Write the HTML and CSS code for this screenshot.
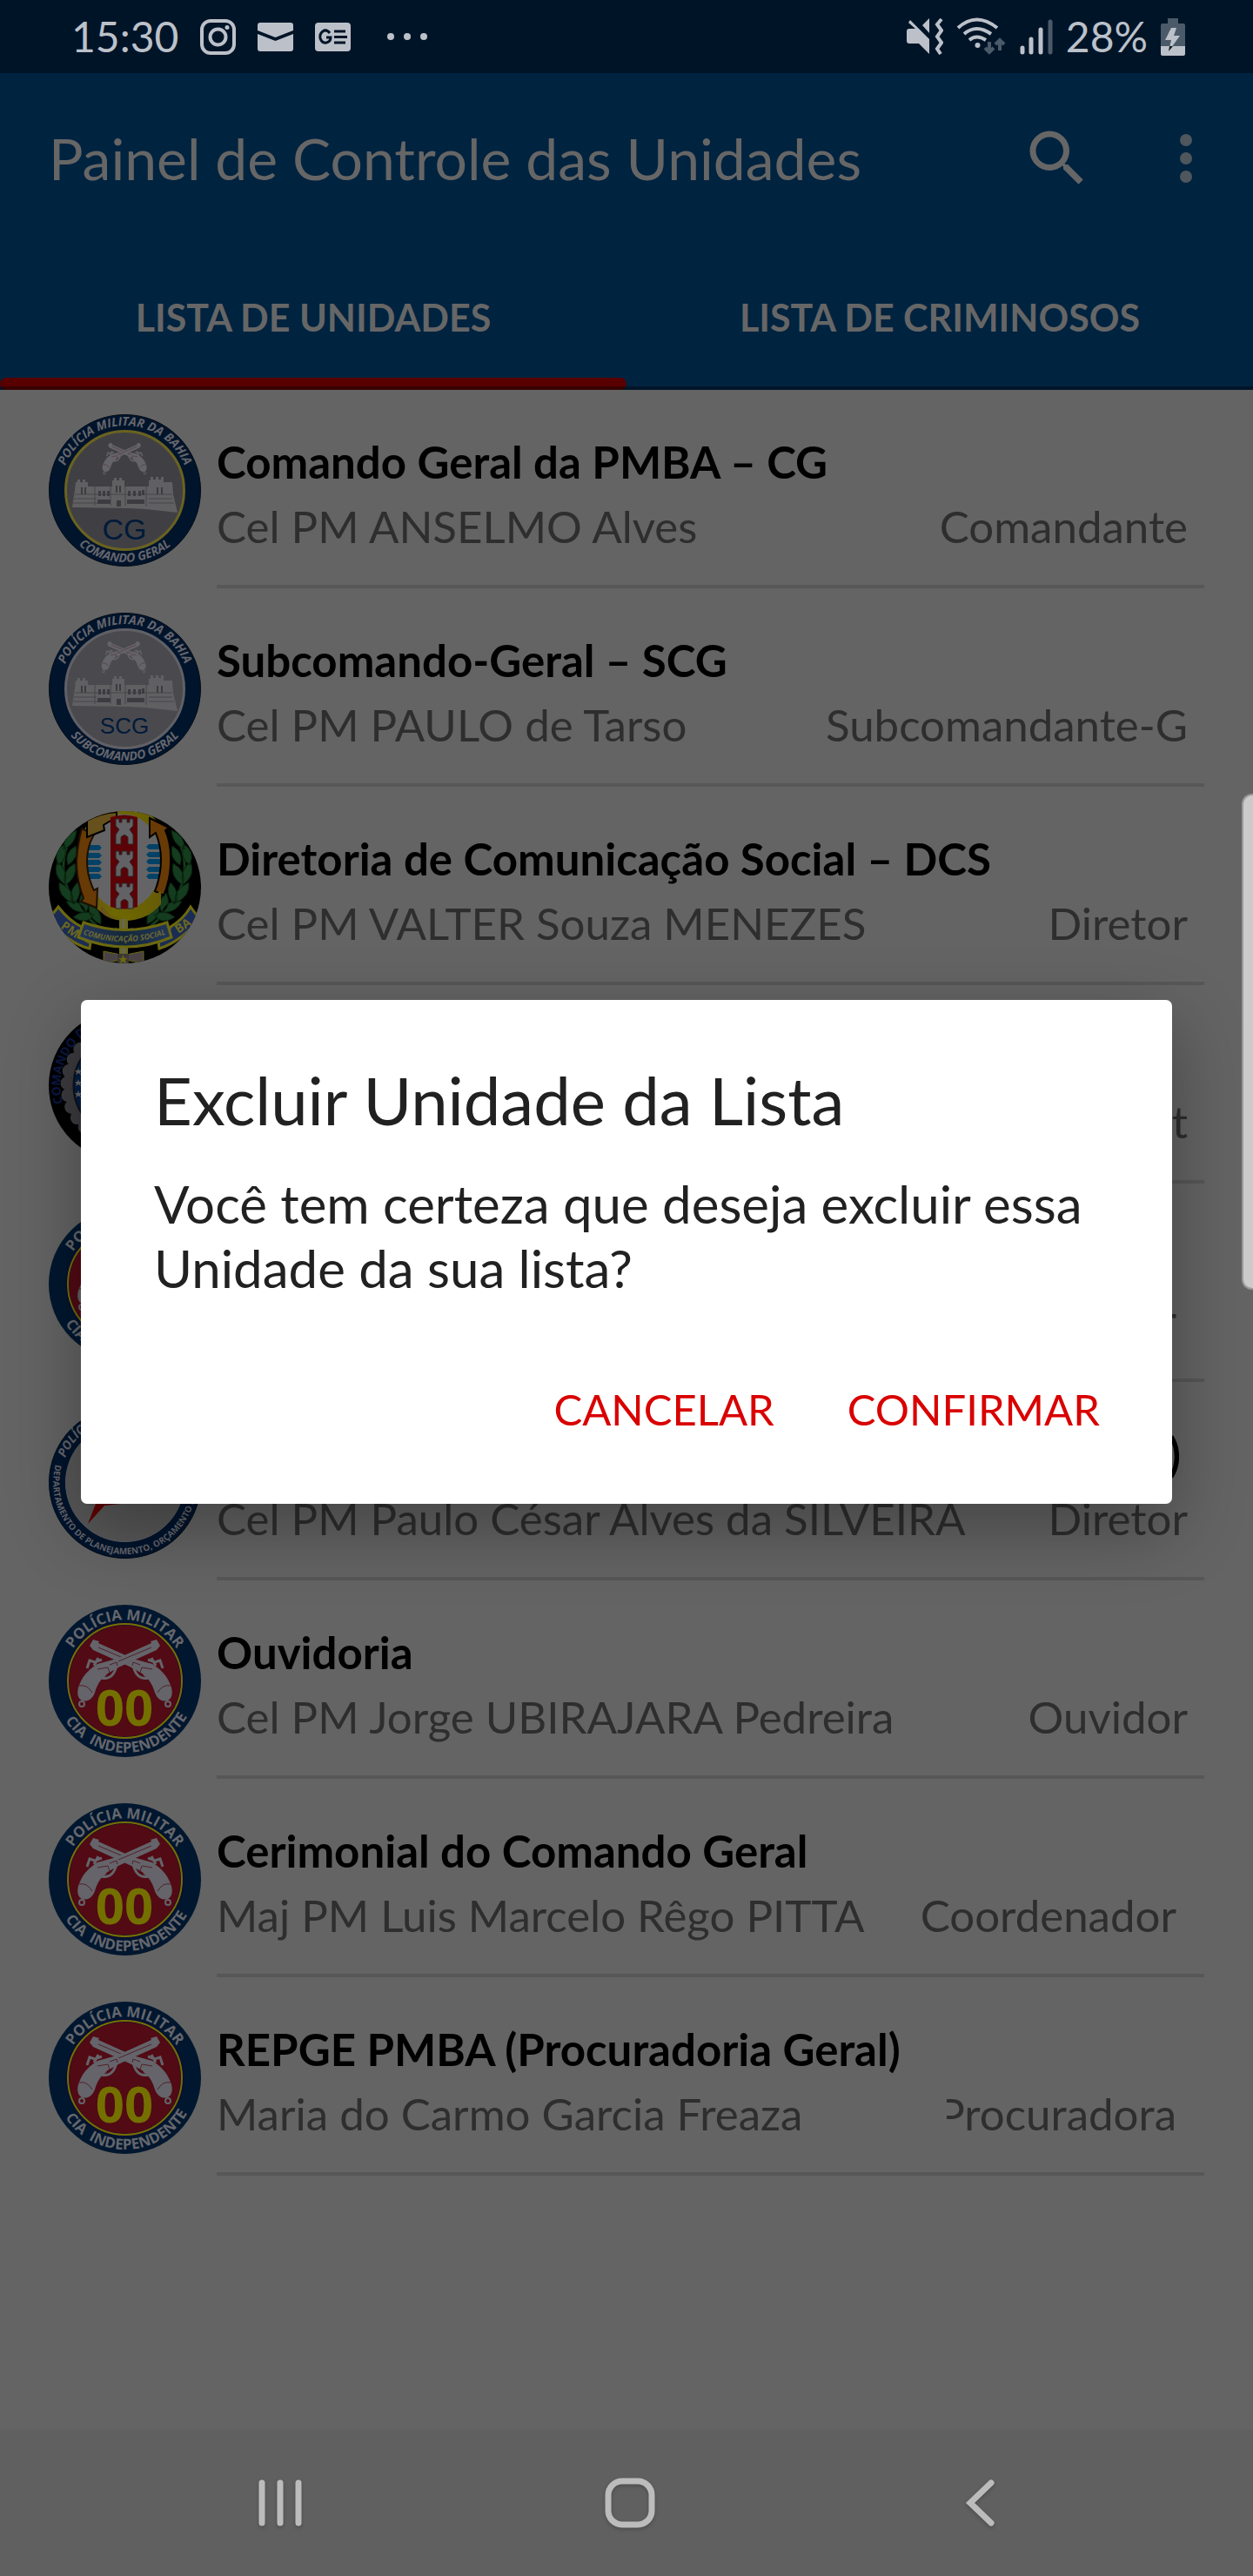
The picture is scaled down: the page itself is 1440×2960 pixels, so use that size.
FILE: index.html
```html
<!DOCTYPE html>
<html lang="pt-BR">
<head>
<meta charset="utf-8">
<meta name="viewport" content="width=device-width, initial-scale=1">
<title>Painel de Controle das Unidades</title>
<link rel="stylesheet" href="styles.css">
</head>
<body>
<svg class="defs" aria-hidden="true">
  <defs>
    <path id="arc-top-70" d="M17.5 87.5A70 70 0 0 1 157.5 87.5"/>
    <path id="arc-top-74" d="M21.500 120.500A74 74 0 1 1 153.500 120.500"/>
    <path id="arc-bottom-82" d="M7.500 67.500A82.460 82.460 0 1 0 167.500 67.500"/>
    <g id="pistol">
      <path fill="#64646a" d="M118 44l-1-2 7-2 4 7-4 5-31 14-13 6-14 8c-8 7-11 14-13 21-3 8-9 11-15 9-6-3-6-12-2-20 4-10 12-17 20-22l22-6z"/>
      <path fill="none" stroke="#64646a" stroke-width="3" d="M60 84q14 3 18-14M66 75q0 9-8 6M44 73l3-9 6 2 8-3M52 70l5-9"/>
      <circle cx="38" cy="114" r="3" fill="none" stroke="#64646a" stroke-width="2"/>
      <path fill="none" stroke="#52202a" stroke-width="1" d="M56 74l12-2 2 6M80 65l38-16M35 93q9-2 15 8M70 69l8-3 1 4"/>
    </g>
    <g id="pistols">
      <use href="#pistol" transform="translate(175) scale(-1 1)"/>
      <use href="#pistol"/>
    </g>
    <g id="fort">
      <path fill="#606062" d="M27 107l3-20 1-9h2v-3h3v3h3v-3h3v3h3v5h28v-7h2v-3h3v3h3v-3h3v3h3v7h28v-7h2v-4h3v3h3v-3h3v3h3v-3h3v6h10l1 14 5 21-37-4-20-1z"/>
      <path fill="none" stroke="#46464a" stroke-width="1" d="M30 92h112M29 97h26M28 102h30M115 97h27M115 102h29M53 83v22M71 83v22M88 83v22M112 82v24"/>
      <path fill="#3c3c40" d="M37 84h2v8h-2zM41 84h2v8h-2zM57 88h3v6h-3zM62 88h3v6h-3zM67 88h3v6h-3zM77 82h2v8h-2zM81 82h2v8h-2zM91 88h3v6h-3zM97 88h3v6h-3zM103 88h3v6h-3zM107 87h3v6h-3zM124 84h2v8h-2zM129 84h2v8h-2zM56 98h15v5h-15zM90 98h20v5h-20zM78 99h5v7h-5z"/>
    </g>
    <g id="crest-cia">
      <circle cx="87.500" cy="87.500" r="87.500" fill="#00172f"/>
      <circle cx="87.500" cy="87.500" r="66" fill="#520a14" stroke="#0c0c36" stroke-width="4"/>
      <circle cx="87.500" cy="87.500" r="65.500" fill="none" stroke="#747000" stroke-width="2"/>
      <text class="crest-text crest-text-cia" text-anchor="middle"><textPath href="#arc-top-70" startOffset="50%">POLÍCIA MILITAR</textPath></text>
      <text class="crest-text crest-text-cia" text-anchor="middle"><textPath href="#arc-bottom-82" startOffset="51%">CIA &#160;INDEPENDENTE</textPath></text>
      <use href="#pistols"/>
      <text class="crest-number" x="87" y="139" text-anchor="middle">00</text>
    </g>
    <path id="tower" fill="#626264" stroke="#28282a" stroke-width="1" d="M0 0h4v4h3V0h6v4h3V0h4v8l-4 4 4 6v11h-6v-8q-4-5-8 0v8H0V18l4-6-4-4z"/>
    <g id="laurel">
      <path fill="none" stroke="#123a1a" stroke-width="3" d="M28 24Q2 72 36 112T78 134"/>
      <g fill="#143c1e" stroke="#0a2210" stroke-width="1">
        <path d="M32 22q-16 6-15 22 14-6 15-22zM18 38q-14 8-7 24 12-8 7-24zM31 40q4 14-9 22-5-14 9-22zM10 58q-6 16 8 26 6-14-8-26zM30 60q4 16-11 25-5-16 11-25zM12 82q-2 16 16 24 2-16-16-24zM33 82q7 12-4 25-9-12 4-25zM20 104q8 14 23 12-6-15-23-12zM38 94q12 10 5 23-12-8-5-23zM28 122q12-10 24-3-8 13-24 3zM46 108q16 4 14 22-15-6-14-22z"/>
      </g>
    </g>
  </defs>
</svg>

<div class="screen">
  <header class="statusbar">
    <div class="status-group">
      <span class="status-text">15:30</span>
      <svg class="ico-insta" width="41" height="41" viewBox="0 0 41 41" fill="none" stroke="#bcc1c9" stroke-width="4"><rect x="2" y="2" width="37" height="37" rx="10"/><circle cx="20.500" cy="20.500" r="9"/><circle cx="31" cy="9.500" r="2.500" fill="#bcc1c9" stroke="none"/></svg>
      <svg width="41" height="33" viewBox="0 0 41 33" fill="#bcc1c9"><path d="M3 0h35q3 0 3 3v6L20.500 17 0 9V3q0-3 3-3zM0 13l20.500 8L41 13v17q0 3-3 3H3q-3 0-3-3z"/></svg>
      <svg width="41" height="33" viewBox="0 0 41 33"><rect width="41" height="33" rx="4" fill="#bcc1c9"/><path fill="none" stroke="#001428" stroke-width="3" d="M17 12q-4-5-8-2-4 3-3 8 2 6 7 5 5-1 5-6h-5M22 10h13M22 16.500h15M22 23h13"/></svg>
      <svg class="ico-dots" width="48" height="8" viewBox="0 0 48 8" fill="#bcc1c9"><circle cx="5" cy="4" r="4"/><circle cx="24" cy="4" r="4"/><circle cx="43" cy="4" r="4"/></svg>
    </div>
    <div class="status-group status-right">
      <svg width="42" height="42" viewBox="0 0 42 42" fill="#bcc1c9"><path d="M4 2l22 22v17L14 29H3q-3 0-3-3V15q0-3 3-3h7L2 5zM26 0v17l-8-9z"/><path fill="none" stroke="#bcc1c9" stroke-width="4" d="M40 1l-5 6 5 7-5 7 5 7-5 7 4 6"/></svg>
      <svg width="58" height="44" viewBox="0 0 58 44" fill="none" stroke="#bcc1c9" stroke-width="4"><path d="M2 12q21-19 45 0M9 19q14-12 31 0M15 26q8-7 19 0"/><circle cx="24.500" cy="32" r="3" fill="#bcc1c9" stroke="none"/><path stroke="#4b5a68" d="M38 28v12M33 35l5 5 5-5M50 38V26M45 31l5-5 5 5"/></svg>
      <svg width="38" height="42" viewBox="0 0 38 42" stroke="#bcc1c9" stroke-width="5" stroke-linecap="round"><path d="M3 34v5M13 24v15M24 13v26"/><path stroke="#4b5a68" d="M35 4v35"/></svg>
      <span class="status-text">28%</span>
      <svg width="28" height="43" viewBox="0 0 28 43"><path fill="#4b5a68" d="M8 6V0h12v6h6q2 0 2 2v24H0V8q0-2 2-2z"/><path fill="#bcc1c9" d="M0 32h28v9q0 2-2 2H2q-2 0-2-2zM12 11h6l-3 9h7L9 38l3-13H5z"/><path fill="#101820" d="M10 32h4l-5 6z"/></svg>
    </div>
  </header>

  <div class="appbar">
    <div class="toolbar">
      <h1>Painel de Controle das Unidades</h1>
      <button class="icon-button" type="button" aria-label="Pesquisar"><svg width="84" height="84" viewBox="0 0 24 24" fill="#666"><path d="M15.500 14h-.79l-.28-.27A6.470 6.470 0 0 0 16 9.500 6.500 6.500 0 1 0 9.500 16c1.610 0 3.090-.59 4.230-1.570l.27.28v.79l5 4.990L20.490 19l-4.990-5zm-6 0C7.010 14 5 11.990 5 9.500S7.010 5 9.500 5 14 7.010 14 9.500 11.990 14 9.500 14z"/></svg></button>
      <button class="icon-button" type="button" aria-label="Mais opções"><svg width="84" height="84" viewBox="0 0 24 24" fill="#4f565c"><circle cx="12" cy="6" r="2"/><circle cx="12" cy="12" r="2"/><circle cx="12" cy="18" r="2"/></svg></button>
    </div>
    <nav class="tabs">
      <button class="tab active" type="button">LISTA DE UNIDADES</button>
      <button class="tab" type="button">LISTA DE CRIMINOSOS</button>
    </nav>
  </div>

  <main>
    <ul class="units">
      <li>
        <svg class="crest" viewBox="0 0 175 175" aria-hidden="true">
          <circle cx="87.500" cy="87.500" r="87" fill="#00142c" stroke="#000a14"/>
          <circle cx="87.500" cy="87.500" r="68" fill="#404044" stroke="#6a6220" stroke-width="3"/>
          <text class="crest-text" text-anchor="middle"><textPath href="#arc-top-74" startOffset="50%">POLÍCIA MILITAR DA BAHIA</textPath></text>
          <text class="crest-text" text-anchor="middle"><textPath href="#arc-bottom-82" startOffset="50%">COMANDO GERAL</textPath></text>
          <use href="#pistols" transform="translate(46 14) scale(.47)"/>
          <use href="#fort"/>
          <text class="crest-sigla" x="87" y="144" text-anchor="middle">CG</text>
        </svg>
        <div class="unit">
          <h2>Comando Geral da PMBA – CG</h2>
          <p><span>Cel PM ANSELMO Alves</span><span class="role">Comandante</span></p>
        </div>
      </li>
      <li>
        <svg class="crest" viewBox="0 0 175 175" aria-hidden="true">
          <circle cx="87.500" cy="87.500" r="87" fill="#00142c" stroke="#000a14"/>
          <circle cx="87.500" cy="87.500" r="68" fill="#4a4a4e" stroke="#606066" stroke-width="3"/>
          <text class="crest-text" text-anchor="middle"><textPath href="#arc-top-74" startOffset="50%">POLÍCIA MILITAR DA BAHIA</textPath></text>
          <text class="crest-text" text-anchor="middle"><textPath href="#arc-bottom-82" startOffset="50%">SUBCOMANDO GERAL</textPath></text>
          <use href="#pistols" transform="translate(45 14) scale(.47)"/>
          <use href="#fort"/>
          <text class="crest-sigla crest-sigla-small" x="87" y="139" text-anchor="middle">SCG</text>
        </svg>
        <div class="unit">
          <h2>Subcomando-Geral – SCG</h2>
          <p><span>Cel PM PAULO de Tarso</span><span class="role">Subcomandante-G</span></p>
        </div>
      </li>
      <li>
        <svg class="crest" viewBox="0 0 175 175" aria-hidden="true">
          <clipPath id="round"><circle cx="87.500" cy="87.500" r="87.500"/></clipPath>
          <linearGradient id="gold"><stop offset="0" stop-color="#66501c"/><stop offset=".4" stop-color="#6e6800"/><stop offset="1" stop-color="#665a08"/></linearGradient>
          <linearGradient id="ribbon"><stop offset="0" stop-color="#22365c"/><stop offset=".5" stop-color="#14283a"/><stop offset="1" stop-color="#22365c"/></linearGradient>
          <g clip-path="url(#round)">
            <rect width="175" height="175" fill="#000"/>
            <use href="#laurel"/>
            <use href="#laurel" transform="translate(173) scale(-1 1)"/>
            <ellipse cx="86" cy="58" rx="49" ry="60" fill="#646466" stroke="url(#gold)" stroke-width="11"/>
            <path fill="#034266" d="M45 39h13l3 3-3 3H45zM44 48h14l3 3-3 3H44zM44 56h14l3 3-3 3H44zM44 64h14l3 3-3 3H44zM45 72h13l3 3-3 3H45zM127 38h-12l-3 3 3 3h13zM129 47h-14l-3 3 3 3h14zM129 55h-14l-3 3 3 3h14zM129 64h-14l-3 3 3 3h14zM128 72h-13l-3 3 3 3h12z"/>
            <path fill="#683a06" stroke="#1c1002" stroke-width="2" d="M38 20l14 7q-8 14-8 30 0 18 8 34l4-2-1 22-18-7 3-4Q32 80 32 58q1-20 6-38z"/>
            <path fill="#683a06" stroke="#000" stroke-width="2" d="M116 8l22 11-4 3q7 16 6 36 0 20-8 39l-10-5q7-18 7-36 0-16-6-31l-7 5z"/>
            <path fill="#66501c" stroke="#000" stroke-width="2" d="M44 11Q60 2 78 1v8Q70 11 63 16l1 6-20 8z"/>
            <path fill="url(#gold)" d="M72 121q22 4 40-15l-1-4 18-10v15q-16 19-42 19-18 0-28-11l2-6z"/>
            <path fill="#5c0206" d="M71 7q16-5 31 0v103q-15 5-31 0z"/>
            <use href="#tower" x="77" y="9"/><use href="#tower" x="77" y="46"/><use href="#tower" x="77" y="83"/>
            <path fill="#686824" d="M81 124h10v51H81z"/>
            <path fill="#66666a" d="M85 124h2v51h-2z"/>
            <path fill="#1a2c54" stroke="#6c6810" stroke-width="3" d="M11 110q12 16 27 23l-2 10q5 6 12 8l-1 7Q22 152 0 124zM163 110q-8 14-23 23l-4 9-10 8 1 8q25-8 46-34z"/>
            <path fill="url(#ribbon)" stroke="#6c6810" stroke-width="3" d="M40 128q47 17 96 0l5 17q-52 22-107 0z"/>
            <path id="ribbon-line" fill="none" d="M38 141q48 18 98 0"/>
            <text class="crest-ribbon" text-anchor="middle"><textPath href="#ribbon-line" startOffset="50%">COMUNICAÇÃO SOCIAL</textPath></text>
            <text class="crest-end" transform="translate(13 134) rotate(34)">PM</text>
            <text class="crest-end" transform="translate(149 141) rotate(-34)">BA</text>
            <path fill="#4a4446" stroke="#6c6810" d="M63 161l20 4v6l-20 4zM109 161l-20 4v6l20 4z"/>
            <path fill="#3c3838" d="M79 164h13v11H79z"/>
            <path fill="#6c6810" d="M85.500 165l1.500 4h4l-3 2 1 4-3.500-2-3.500 2 1-4-3-2h4z"/>
          </g>
        </svg>
        <div class="unit">
          <h2>Diretoria de Comunicação Social – DCS</h2>
          <p><span>Cel PM VALTER Souza MENEZES</span><span class="role">Diretor</span></p>
        </div>
      </li>
      <li>
        <svg class="crest" viewBox="0 0 175 175" aria-hidden="true">
          <circle cx="87.500" cy="87.500" r="87.500" fill="#000"/>
          <circle cx="87.500" cy="87.500" r="66" fill="none" stroke="#3c3c40" stroke-width="16" stroke-dasharray="0 14" stroke-linecap="round"/>
          <circle cx="87.500" cy="87.500" r="62" fill="#3c3c40"/>
          <circle cx="87.500" cy="87.500" r="59" fill="#001e44" stroke="#101014" stroke-width="2"/>
          <text class="crest-text crest-text-dark" text-anchor="middle"><textPath href="#arc-top-74" startOffset="35%">COMANDO DE OPERAÇÕES</textPath></text>
          <path fill="#686868" d="M34 67l1 3h3l-2 2 1 3-3-2-3 2 1-3-2-2h3zM34 80l1 3h3l-2 2 1 3-3-2-3 2 1-3-2-2h3zM34 93l1 3h3l-2 2 1 3-3-2-3 2 1-3-2-2h3z"/>
        </svg>
        <div class="unit">
          <h2>Comando de Operações</h2>
          <p><span>Cel PM</span><span class="role">Comandant</span></p>
        </div>
      </li>
      <li>
        <svg class="crest" viewBox="0 0 175 175" aria-hidden="true"><use href="#crest-cia"/></svg>
        <div class="unit">
          <h2>Cia Independente</h2>
          <p><span>Cel PM</span><span class="role role-inset">Coordenador</span></p>
        </div>
      </li>
      <li>
        <svg class="crest" viewBox="0 0 175 175" aria-hidden="true">
          <circle cx="87.500" cy="87.500" r="87" fill="#00142c" stroke="#000a14"/>
          <circle cx="87.500" cy="87.500" r="68" fill="#585858" stroke="#606066" stroke-width="1"/>
          <text class="crest-text" text-anchor="middle"><textPath href="#arc-top-74" startOffset="50%">POLÍCIA MILITAR DA BAHIA</textPath></text>
          <text class="crest-text crest-text-fine" text-anchor="middle"><textPath href="#arc-bottom-82" startOffset="50%">DEPARTAMENTO DE PLANEJAMENTO, ORÇAMENTO E GESTÃO</textPath></text>
          <path fill="#600000" d="M45 135l11-28 14-37 18-28 14 36 38 4-40 28-36 4z"/>
        </svg>
        <div class="unit">
          <h2 class="title-end">Planejamento, Orçamento e Gestão (DPOG)</h2>
          <p><span>Cel PM Paulo César Alves da SILVEIRA</span><span class="role">Diretor</span></p>
        </div>
      </li>
      <li>
        <svg class="crest" viewBox="0 0 175 175" aria-hidden="true"><use href="#crest-cia"/></svg>
        <div class="unit">
          <h2>Ouvidoria</h2>
          <p><span>Cel PM Jorge UBIRAJARA Pedreira</span><span class="role">Ouvidor</span></p>
        </div>
      </li>
      <li>
        <svg class="crest" viewBox="0 0 175 175" aria-hidden="true"><use href="#crest-cia"/></svg>
        <div class="unit">
          <h2>Cerimonial do Comando Geral</h2>
          <p><span>Maj PM Luis Marcelo Rêgo PITTA</span><span class="role role-inset">Coordenador</span></p>
        </div>
      </li>
      <li>
        <svg class="crest" viewBox="0 0 175 175" aria-hidden="true"><use href="#crest-cia"/></svg>
        <div class="unit">
          <h2>REPGE PMBA (Procuradoria Geral)</h2>
          <p><span>Maria do Carmo Garcia Freaza</span><span class="role role-inset role-clipped">Procuradora</span></p>
        </div>
      </li>
    </ul>
  </main>

  <footer class="navbar">
    <button type="button" aria-label="Recentes"><svg width="64" height="64" viewBox="0 0 64 64" stroke="#bcbcbc" stroke-width="7" stroke-linecap="round"><path d="M11 9v46M32 9v46M53 9v46"/></svg></button>
    <button type="button" aria-label="Início"><svg width="64" height="64" viewBox="0 0 64 64" fill="none" stroke="#bcbcbc" stroke-width="7"><rect x="7" y="7" width="50" height="50" rx="16"/></svg></button>
    <button type="button" aria-label="Voltar"><svg width="64" height="64" viewBox="0 0 64 64" fill="none" stroke="#bcbcbc" stroke-width="7" stroke-linecap="round"><path d="M45 9L21 32l24 23"/></svg></button>
  </footer>

  <div class="overlay">
    <section class="dialog" role="dialog" aria-modal="true" aria-labelledby="dialog-title">
      <h2 id="dialog-title">Excluir Unidade da Lista</h2>
      <p>Você tem certeza que deseja excluir essa Unidade da sua lista?</p>
      <div class="actions">
        <button type="button">CANCELAR</button>
        <button type="button">CONFIRMAR</button>
      </div>
    </section>
  </div>
  <div class="edge-handle"></div>
</div>
</body>
</html>
```
FILE: styles.css
```css
* { box-sizing: border-box; }

body, h1, h2, p, ul { margin: 0; padding: 0; }

body {
  background: #646464;
  font-family: Lato, "Open Sans", sans-serif;
}

button {
  padding: 0;
  border: 0;
  background: none;
  color: inherit;
  font: inherit;
}

svg { display: block; flex: none; }

.defs { position: absolute; width: 0; height: 0; }

.screen {
  position: relative;
  display: flex;
  flex-direction: column;
  min-height: 100vh;
  overflow: hidden;
}

/* Status bar */
.statusbar {
  display: flex;
  align-items: center;
  justify-content: space-between;
  height: 84px;
  padding: 0 78px 0 82px;
  background: #001428;
  color: #bcc1c9;
}

.status-group { display: flex; align-items: center; gap: 25px; }
.status-right { gap: 15px; }
.status-text { font-size: 48px; line-height: 84px; }
.ico-dots { margin-left: 16px; }

/* App bar */
.appbar { background: #002340; color: #666; }

.toolbar {
  display: flex;
  align-items: center;
  height: 196px;
  padding: 0 35px 0 56px;
}

.toolbar h1 {
  flex: 1;
  font-size: 66px;
  font-weight: 400;
  line-height: 84px;
  white-space: nowrap;
}

.icon-button + .icon-button { margin-left: 64px; }

.tabs {
  position: relative;
  display: flex;
  height: 168px;
}

.tabs::after {
  content: "";
  position: absolute;
  inset: auto 0 0;
  height: 4px;
  background: rgba(0, 0, 0, .36);
}

.tab {
  position: relative;
  flex: 1;
  font-size: 43px;
  font-weight: 700;
}

.tab.active::after {
  content: "";
  position: absolute;
  inset: auto 0 0;
  height: 14px;
  border-radius: 7px;
  background: #580000;
}

/* Unit list */
.units { list-style: none; }

.units li {
  display: flex;
  gap: 18px;
  height: 228px;
  padding: 0 56px;
}

.crest { width: 175px; height: 175px; margin-top: 28px; overflow: visible; }

.unit {
  flex: 1;
  min-width: 0;
  padding: 46px 19px 0 0;
  border-bottom: 4px solid #575757;
}

.unit h2 {
  color: #000;
  font-size: 51px;
  font-weight: 700;
  line-height: 74px;
  white-space: nowrap;
}

.unit h2.title-end { margin-right: 8px; text-align: right; }

.unit p {
  display: flex;
  justify-content: space-between;
  color: #2e2e2e;
  font-size: 51px;
  line-height: 74px;
  white-space: nowrap;
}

.role-inset { margin-right: 13px; }

.role-clipped {
  display: flex;
  justify-content: flex-end;
  width: 264px;
  overflow: hidden;
}

/* Crest lettering */
.crest-text {
  fill: #66666c;
  font-family: "Open Sans", sans-serif;
  font-size: 14px;
  font-style: italic;
  font-weight: 700;
}

.crest-text-cia { font-size: 17px; font-style: normal; }
.crest-text-dark { fill: #0a1844; font-style: normal; }
.crest-text-fine { font-size: 10px; font-style: normal; }
.crest-number { fill: #747000; font-family: "Open Sans", sans-serif; font-size: 58px; font-weight: 700; }
.crest-sigla { fill: #001a3a; font-family: "Liberation Sans", sans-serif; font-size: 34px; }
.crest-sigla-small { font-size: 26px; }
.crest-ribbon { fill: #6c6830; font-family: "Open Sans", sans-serif; font-size: 9px; font-style: italic; font-weight: 700; }
.crest-end { fill: #6c6820; font-family: "Open Sans", sans-serif; font-size: 14px; font-weight: 700; }

/* System navigation */
.navbar {
  display: flex;
  height: 168px;
  margin-top: auto;
  padding: 0 113px 0 121px;
  background: #606060;
}

.navbar button {
  display: flex;
  flex: 1;
  align-items: center;
  justify-content: center;
}

.navbar svg { filter: drop-shadow(0 2px 2px rgba(0, 0, 0, .2)); }

/* Dialog */
.overlay {
  position: absolute;
  inset: 84px 0 168px;
  display: flex;
  align-items: center;
  padding: 0 93px;
}

.dialog {
  flex: 1;
  padding: 73px 0 46px;
  border-radius: 7px;
  background: #fff;
  box-shadow: 0 28px 84px rgba(0, 0, 0, .32);
  color: #212121;
}

.dialog h2 {
  padding: 0 84px;
  font-size: 76px;
  font-weight: 400;
  line-height: 84px;
}

.dialog p {
  margin-top: 40px;
  padding: 0 84px;
  font-size: 60px;
  line-height: 74px;
}

.actions {
  display: flex;
  justify-content: flex-end;
  gap: 28px;
  margin-top: 62px;
  padding-right: 55px;
}

.actions button {
  height: 126px;
  padding: 0 28px;
  color: #d90000;
  font-size: 49px;
}

.edge-handle {
  position: absolute;
  top: 912px;
  right: 0;
  width: 13px;
  height: 570px;
  border: 2px solid #999;
  border-right: 0;
  border-radius: 12px 0 0 12px;
  background: #cbcbcb;
}
```
